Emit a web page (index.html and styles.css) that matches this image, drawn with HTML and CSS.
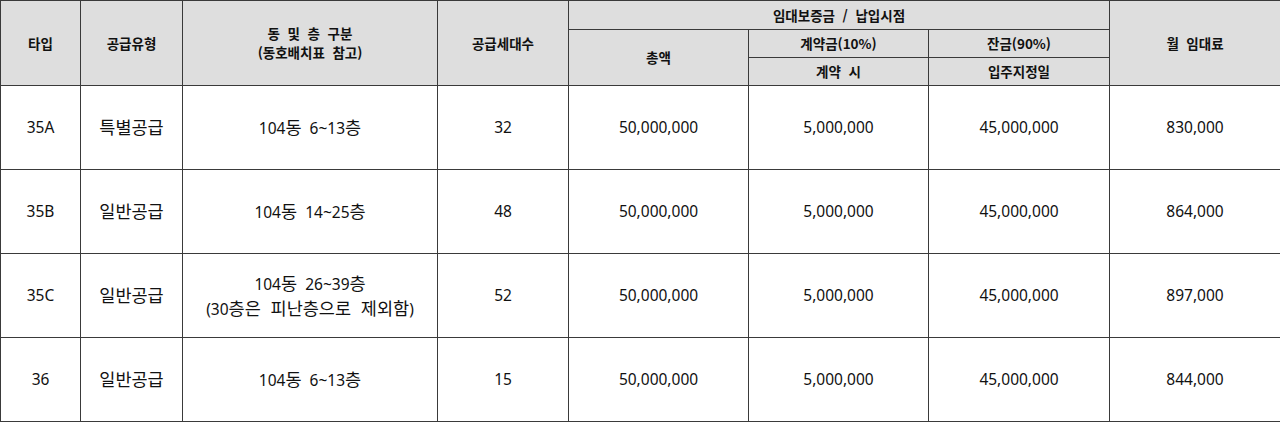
FILE: index.html
```html
<!DOCTYPE html>
<html lang="ko">
<head>
<meta charset="utf-8">
<link rel="stylesheet" href="styles.css">
</head>
<body>
<table class="rent">
  <colgroup>
    <col class="c1"><col class="c2"><col class="c3"><col class="c4">
    <col class="c5"><col class="c6"><col class="c7"><col class="c8">
  </colgroup>
  <thead>
    <tr class="h1">
      <th rowspan="3">타입</th>
      <th rowspan="3">공급유형</th>
      <th rowspan="3">동&nbsp; 및&nbsp; 층&nbsp; 구분<br>(동호배치표&nbsp; 참고)</th>
      <th rowspan="3">공급세대수</th>
      <th colspan="3">임대보증금&nbsp; /&nbsp; 납입시점</th>
      <th rowspan="3">월&nbsp; 임대료</th>
    </tr>
    <tr class="h2">
      <th rowspan="2">총액</th>
      <th>계약금(10%)</th>
      <th>잔금(90%)</th>
    </tr>
    <tr class="h3">
      <th>계약&nbsp; 시</th>
      <th>입주지정일</th>
    </tr>
  </thead>
  <tbody>
    <tr>
      <td>35A</td><td><span class="ko">특별공급</span></td><td>104<span class="ko">동</span>&nbsp; 6~13<span class="ko">층</span></td><td>32</td>
      <td>50,000,000</td><td>5,000,000</td><td>45,000,000</td><td>830,000</td>
    </tr>
    <tr>
      <td>35B</td><td><span class="ko">일반공급</span></td><td>104<span class="ko">동</span>&nbsp; 14~25<span class="ko">층</span></td><td>48</td>
      <td>50,000,000</td><td>5,000,000</td><td>45,000,000</td><td>864,000</td>
    </tr>
    <tr>
      <td>35C</td><td><span class="ko">일반공급</span></td><td>104<span class="ko">동</span>&nbsp; 26~39<span class="ko">층</span><br>(30<span class="ko">층은&nbsp; 피난층으로&nbsp; 제외함</span>)</td><td>52</td>
      <td>50,000,000</td><td>5,000,000</td><td>45,000,000</td><td>897,000</td>
    </tr>
    <tr>
      <td>36</td><td><span class="ko">일반공급</span></td><td>104<span class="ko">동</span>&nbsp; 6~13<span class="ko">층</span></td><td>15</td>
      <td>50,000,000</td><td>5,000,000</td><td>45,000,000</td><td>844,000</td>
    </tr>
  </tbody>
</table>
</body>
</html>
```
FILE: styles.css
```css
html, body {
  margin: 0;
  padding: 0;
  background: #ffffff;
}
.rent {
  border-collapse: collapse;
  table-layout: fixed;
  width: 1280px;
  font-family: "Noto Sans", "Noto Sans CJK KR", sans-serif;
  color: #111;
}
.c1 { width: 80px; }
.c2 { width: 102px; }
.c3 { width: 255px; }
.c4 { width: 131px; }
.c5 { width: 180px; }
.c6 { width: 180px; }
.c7 { width: 181px; }
.c8 { width: 171px; }
.rent th,
.rent td {
  border: 1px solid #3a3a3a;
  text-align: center;
  vertical-align: middle;
  padding: 0;
}
.rent th {
  background: #dedede;
  font-family: "Noto Sans CJK KR", sans-serif;
  font-weight: 700;
  font-size: 13.5px;
  line-height: 19px;
}
.rent .h1 { height: 29px; }
.rent .h2, .rent .h3 { height: 28px; }
.rent td {
  font-size: 15.5px;
  line-height: 23px;
  height: 83px;
}
.rent .ko {
  font-family: "Noto Sans CJK KR", sans-serif;
  font-size: 17.5px;
}
```
